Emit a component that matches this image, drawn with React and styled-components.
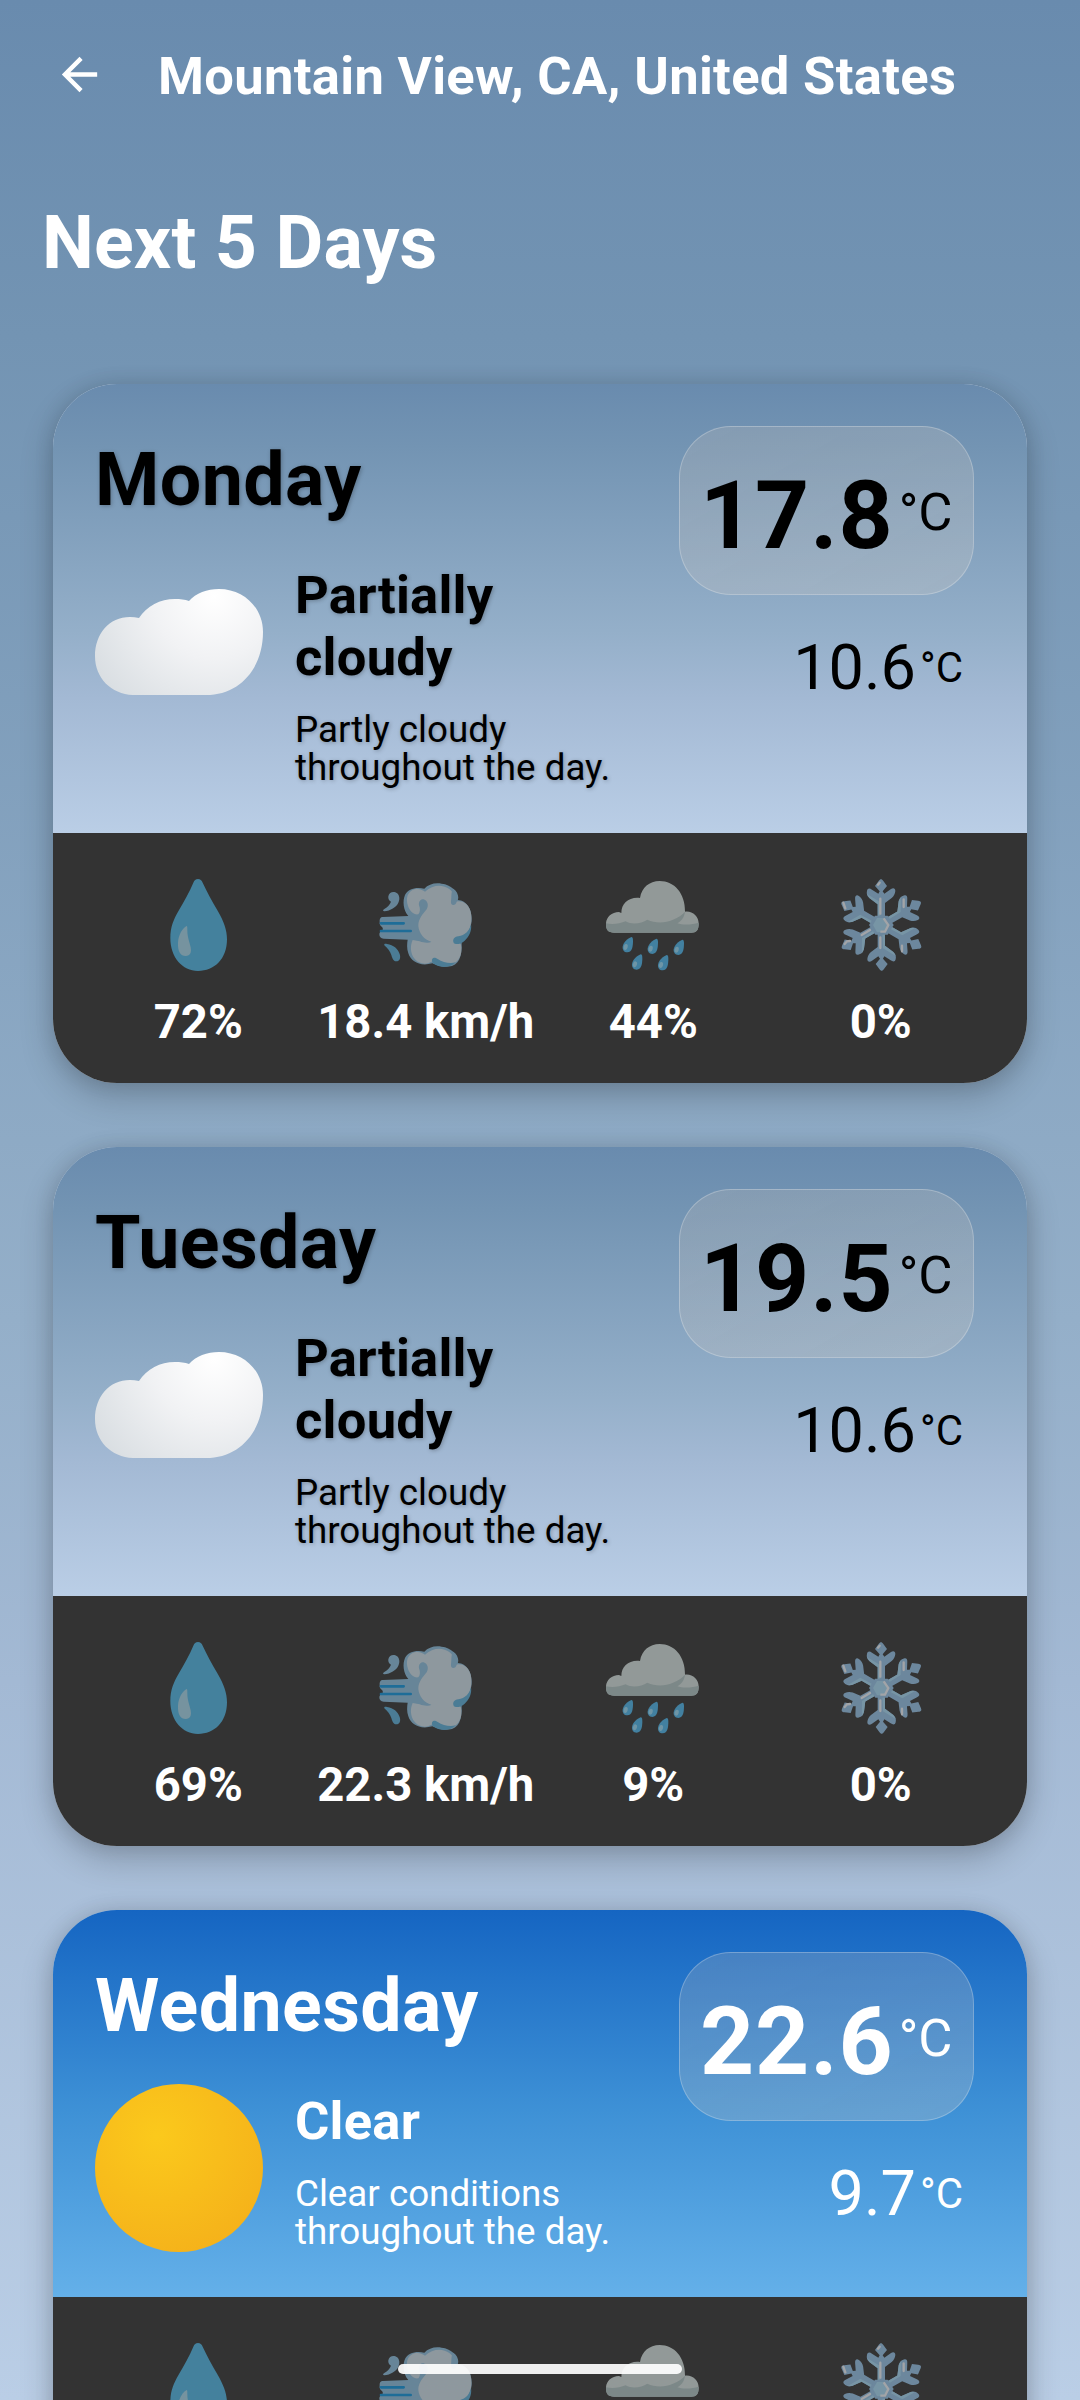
import React from "react";
import styled, { createGlobalStyle } from "styled-components";

const GlobalStyle = createGlobalStyle`
  *, *::before, *::after { box-sizing: border-box; }
  body { margin: 0; font-family: Roboto, "Liberation Sans", sans-serif; }
`;

const themes = {
  cloudy: {
    ink: "#000",
    sky: "linear-gradient(180deg, #698bae 0%, #7394b3 14%, #94afc9 55%, #a3b9d4 70%, #bacee6 100%)",
    shadow: "1px 1px 4px rgba(0, 0, 0, 0.26)",
  },
  clear: {
    ink: "#fff",
    sky: "linear-gradient(180deg, #1565c2 0%, #3e91d6 52%, #64b0e9 100%)",
    shadow: "none",
  },
};

const Screen = styled.main`
  width: 1080px;
  height: 2400px;
  overflow: hidden;
  display: flex;
  flex-direction: column;
  background: linear-gradient(180deg, #698bae 0%, #7394b3 14%, #94afc9 55%, #a3b9d4 70%, #bacee6 100%);
`;

const TopBar = styled.header`
  display: flex;
  align-items: center;
  height: 148px;
  padding-left: 53px;
  gap: 52px;
  flex: none;
`;

const BackButton = styled.button`
  display: flex;
  width: 53px;
  height: 53px;
  padding: 0;
  border: 0;
  background: none;
  color: #fff;
`;

const Place = styled.h1`
  margin: 3px 0 0;
  font-size: 52.5px;
  line-height: 62px;
  font-weight: 700;
  letter-spacing: 0.32px;
  color: #fff;
  white-space: nowrap;
`;

const Heading = styled.h2`
  margin: 0;
  padding: 52px 42px 0;
  height: 236px;
  flex: none;
  font-size: 73.5px;
  line-height: 86px;
  font-weight: 700;
  letter-spacing: 0.15px;
  color: #fff;
`;

const CardList = styled.section`
  display: flex;
  flex-direction: column;
  gap: 64px;
  padding: 0 53px;
`;

const Card = styled.article`
  flex: none;
  border-radius: 64px;
  overflow: hidden;
  background: #d3dde8;
  box-shadow: 0 14px 34px rgba(0, 0, 0, 0.2), 0 0 20px rgba(0, 0, 0, 0.11);
`;

const CardTop = styled.div`
  display: flex;
  justify-content: space-between;
  padding: 42px 53px 45px 42px;
  background: ${(p) => p.$theme.sky};
  color: ${(p) => p.$theme.ink};
`;

const Info = styled.div`
  padding-top: 11px;
  text-shadow: ${(p) => p.$theme.shadow};
`;

const Day = styled.h3`
  margin: 0;
  font-size: 73.5px;
  line-height: 86px;
  font-weight: 700;
  letter-spacing: 0.4px;
`;

const Conditions = styled.div`
  display: flex;
  align-items: flex-start;
  gap: 32px;
  padding-top: 35px;
`;

const SkyIcon = styled.svg`
  display: block;
  width: 168px;
  height: 168px;
  flex: none;
`;

const Summary = styled.div`
  width: 330px;
  padding: 6px 0 1px;
`;

const SummaryTitle = styled.h4`
  margin: 0;
  font-size: 52.5px;
  line-height: 62px;
  font-weight: 700;
  letter-spacing: 0.25px;
`;

const SummaryText = styled.p`
  margin: 23px 0 0;
  font-size: 36.75px;
  line-height: 38px;
`;

const Temps = styled.div`
  display: flex;
  flex-direction: column;
  align-items: flex-end;
  gap: 36px;
`;

const HighPill = styled.div`
  display: flex;
  align-items: flex-start;
  gap: 5px;
  width: 295px;
  height: 169px;
  padding: 33px 0 0 20px;
  border: 1px solid rgba(255, 255, 255, 0.24);
  border-radius: 52px;
  background: linear-gradient(150deg, rgba(198, 190, 184, 0.24), rgba(215, 208, 200, 0.26));
`;

const High = styled.span`
  font-size: 94.5px;
  line-height: 111px;
  font-weight: 700;
  letter-spacing: 0.9px;
`;

const Low = styled.span`
  font-size: 63px;
  line-height: 74px;
`;

const Unit = styled.span`
  font-size: ${(p) => p.$size}px;
  line-height: ${(p) => p.$size * 1.2}px;
  margin-top: ${(p) => p.$drop}px;
`;

const LowRow = styled.div`
  display: flex;
  align-items: flex-start;
  gap: 4px;
  padding-right: 11px;
`;

const Metrics = styled.footer`
  display: grid;
  grid-template-columns: repeat(4, 227.5px);
  justify-content: center;
  height: 250px;
  padding-right: 1px;
  background: #333;
`;

const Metric = styled.div`
  display: flex;
  flex-direction: column;
  align-items: center;
  padding-top: 37px;
`;

const MetricIcon = styled.svg`
  display: block;
  width: 110px;
  height: 110px;
`;

const MetricValue = styled.span`
  margin-top: 14px;
  font-size: 47.25px;
  line-height: 56px;
  font-weight: 700;
  color: #fff;
  white-space: nowrap;
`;

const HomeBar = styled.div`
  position: fixed;
  left: 398px;
  top: 2364px;
  width: 284px;
  height: 10px;
  border-radius: 5px;
  background: rgba(255, 255, 255, 0.92);
`;

function CloudIcon() {
  return (
    <SkyIcon viewBox="0 0 168 168">
      <defs>
        <radialGradient id="cloudFill" gradientUnits="userSpaceOnUse" cx="119" cy="38" r="140">
          <stop offset="0" stopColor="#ffffff" />
          <stop offset="0.45" stopColor="#f1f2f4" />
          <stop offset="1" stopColor="#d9dee2" />
        </radialGradient>
      </defs>
      <path
        fill="url(#cloudFill)"
        d="M0 98 C0 76 14 59 35 59 C38 59 41 59.500 44 60 C52 48 65 41 80 41 C85 41 90 41.500 94 43 C101 35 112 31 124 31 C149 31 168 50 168 74 C168 110 145 137 111 137 H38 C16 136 0 120 0 98 Z"
      />
    </SkyIcon>
  );
}

function SunIcon() {
  return (
    <SkyIcon viewBox="0 0 168 168">
      <defs>
        <radialGradient id="sunFill" gradientUnits="userSpaceOnUse" cx="62" cy="52" r="130">
          <stop offset="0" stopColor="#fbc91c" />
          <stop offset="1" stopColor="#f5b11a" />
        </radialGradient>
      </defs>
      <circle cx="84" cy="84" r="84" fill="url(#sunFill)" />
    </SkyIcon>
  );
}

function DropIcon() {
  return (
    <MetricIcon viewBox="0 0 330 330">
      <path
        fill="#44819d"
        d="M165 27 C158 27 154 31 151 38 C140 66 122 96 106 124 C92 149 82 170 82 205 C82 262 118 303 165 303 C214 303 252 267 252 208 C252 180 243 155 224 122 C206 91 190 62 179 38 C176 31 172 27 165 27 Z"
      />
      <path
        fill="#76939f"
        d="M131 168 C118 175 106 195 105 219 C104 245 113 258 128 258 C142 258 146 248 143 232 C138 210 133 200 133 180 C133 172 133 168 131 168 Z"
      />
    </MetricIcon>
  );
}

function WindIcon() {
  return (
    <MetricIcon viewBox="0 0 330 330">
      <g fill="#678598">
        <path d="M52 79 C54 68 64 64 73 67 C85 71 88 86 82 98 C76 112 58 122 40 124 C35 124 35 120 40 117 C50 111 57 103 60 95 C54 92 51 87 52 79 Z" />
        <path d="M35 141 L112 138 C97 122 94 93 102 75 C110 58 134 50 160 56 C172 43 192 37 212 41 C240 44 260 62 261 90 C287 92 303 117 302 150 C301 175 290 194 271 205 C275 245 270 280 243 288 C222 294 200 288 184 280 C148 290 120 276 112 250 C107 235 108 221 110 209 L38 206 C29 206 25 200 25 193 C25 187 28 185 33 182 C37 178 36 173 32 170 C27 166 25 162 26 156 C25 147 28 141 35 141 Z" />
      </g>
      <path fill="#4b7c95" d="M40 226 C38 222 42 220 48 222 C68 225 80 236 86 252 C90 264 86 274 76 274 C66 274 64 264 61 255 C57 243 50 235 40 226 Z" />
      <g fill="#8e989e">
        <path d="M162 65 C186 44 214 42 236 58 C250 70 253 82 248 97 C270 88 290 98 298 122 C306 150 299 184 278 200 C266 208 260 214 270 224 C274 247 268 268 250 280 C232 288 210 280 188 271 C170 286 146 284 132 268 C116 250 118 224 125 210 L146 214 C160 220 176 219 181 215 C160 210 144 190 142 168 C141 146 158 130 167 118 C174 106 170 92 158 88 C150 86 142 94 144 106 C148 115 148 127 142 133 C130 136 116 124 111 108 C103 84 110 65 130 58 C144 54 156 60 162 65 Z" />
      </g>
      <path fill="#678598" d="M246 56 C240 66 242 78 240 94 C238 104 246 108 253 103 C258 99 256 90 262 85 C262 72 256 61 246 56 Z" />
      <path fill="#4b7c95" d="M300 163 C295 184 282 196 262 199 C249 201 244 209 248 218 C254 226 270 222 281 212 C295 200 303 181 300 163 Z" />
      <path fill="#4b7c95" d="M187 264 C180 267 182 279 191 283 C212 295 238 293 254 277 C236 282 216 277 200 267 C195 264 191 262 187 264 Z" />
      <path stroke="#1e6d98" strokeWidth="8" strokeLinecap="round" d="M30 160 H98 M30 183 H119" />
    </MetricIcon>
  );
}

const rainDrops = [
  [85, 224],
  [160, 229],
  [238, 232],
  [113, 276],
  [191, 278],
];

function RainIcon() {
  return (
    <MetricIcon viewBox="-5 0 330 330">
      <path
        fill="#929998"
        d="M19 160 C20 141 36 126 58 126 C60 127 62 128 65 129 C65 100 88 80 121 84 C126 53 149 33 180 33 C224 33 257 70 256 125 C278 122 297 138 297 161 C297 180 290 188 275 188 H44 C25 188 19 181 19 160 Z"
      />
      <path
        fill="#7c8888"
        d="M19 160 C38 165 61 161 78 154 C96 165 126 161 143 149 C166 160 196 160 220 149 C236 142 250 133 256 125 C254 142 244 154 233 160 C250 166 280 164 297 158 C298 180 290 188 275 188 H44 C25 188 18 180 19 160 Z"
      />
      {rainDrops.map(([x, y]) => (
        <g key={x} transform={`translate(${x} ${y})`}>
          <path fill="#4280a0" d="M10 -23 C14 -23 15 -18 15 -12 C15 4 13 22 -2 23 C-12 23 -17 15 -16 6 C-14 -8 -1 -18 10 -23 Z" />
          <ellipse cx="-7" cy="7" rx="6" ry="9" fill="#6e95a6" transform="rotate(15 -7 7)" />
        </g>
      ))}
    </MetricIcon>
  );
}

function SnowArm({ angle }) {
  return (
    <g transform={`translate(167 165) rotate(${angle})`}>
      <path
        fill="#6c879d"
        d="M-11 -20 V-62 L-36 -81 C-43 -87 -45 -94 -43 -103 C-41 -111 -35 -111 -28 -106 L-9 -94 L-5 -101 L-19 -117 L-8 -132 C-3 -139 1 -139 6 -132 L17 -117 L4 -101 L9 -94 L28 -107 C35 -112 42 -111 42 -102 C41 -94 38 -87 31 -81 L11 -66 V-20 Z"
      />
      <path
        fill="#7795a5"
        d="M-11 -20 V-62 L-36 -81 L-43 -92 L-32 -86 L-5 -70 L-3 -20 Z"
      />
    </g>
  );
}

function SnowIcon() {
  return (
    <MetricIcon viewBox="1 0 330 330">
      {[0, 60, 120, 180, 240, 300].map((angle) => (
        <SnowArm key={angle} angle={angle} />
      ))}
      <path fill="#6c879d" d="M148 137 H186 L204 165 L186 194 H149 L130 165 Z" />
      <path fill="#7795a5" d="M154 144 H178 L188 165 L178 187 H154 L142 165 Z" />
      <path fill="none" stroke="#a2a4a7" strokeWidth="7" d="M174 145 L188 165 L178 185 H164" />
      <g fill="none" stroke="#a2a4a7" strokeWidth="7" strokeLinecap="round">
        <path d="M164 86 V131 M164 202 V234 M108 195 L133 180 M234 88 V111 M229 227 V244 M53 98 L59 115 M157 44 L162 38 M57 222 L64 214 L73 213" />
      </g>
    </MetricIcon>
  );
}

const skyIcons = { cloudy: CloudIcon, clear: SunIcon };

const forecast = [
  {
    day: "Monday",
    sky: "cloudy",
    title: ["Partially", "cloudy"],
    text: ["Partly cloudy", "throughout the day."],
    high: "17.8",
    low: "10.6",
    metrics: ["72%", "18.4 km/h", "44%", "0%"],
  },
  {
    day: "Tuesday",
    sky: "cloudy",
    title: ["Partially", "cloudy"],
    text: ["Partly cloudy", "throughout the day."],
    high: "19.5",
    low: "10.6",
    metrics: ["69%", "22.3 km/h", "9%", "0%"],
  },
  {
    day: "Wednesday",
    sky: "clear",
    title: ["Clear"],
    text: ["Clear conditions", "throughout the day."],
    high: "22.6",
    low: "9.7",
    metrics: ["", "", "", ""],
  },
];

const metricIcons = [DropIcon, WindIcon, RainIcon, SnowIcon];

const lines = (parts) =>
  parts.map((part, i) => (
    <React.Fragment key={part}>
      {i > 0 && <br />}
      {part}
    </React.Fragment>
  ));

function DayCard({ item }) {
  const theme = themes[item.sky];
  const Sky = skyIcons[item.sky];
  return (
    <Card>
      <CardTop $theme={theme}>
        <Info $theme={theme}>
          <Day>{item.day}</Day>
          <Conditions>
            <Sky />
            <Summary>
              <SummaryTitle>{lines(item.title)}</SummaryTitle>
              <SummaryText>{lines(item.text)}</SummaryText>
            </Summary>
          </Conditions>
        </Info>
        <Temps>
          <HighPill>
            <High>{item.high}</High>
            <Unit $size={52.5} $drop={21}>°C</Unit>
          </HighPill>
          <LowRow>
            <Low>{item.low}</Low>
            <Unit $size={42} $drop={12}>°C</Unit>
          </LowRow>
        </Temps>
      </CardTop>
      <Metrics>
        {metricIcons.map((Icon, i) => (
          <Metric key={i}>
            <Icon />
            <MetricValue>{item.metrics[i]}</MetricValue>
          </Metric>
        ))}
      </Metrics>
    </Card>
  );
}

export default function App() {
  return (
    <>
      <GlobalStyle />
      <Screen>
        <TopBar>
          <BackButton aria-label="Back">
            <svg viewBox="0 0 24 24" width="53" height="53" fill="currentColor">
              <path d="M20 11H7.83l5.59-5.59L12 4l-8 8 8 8 1.410-1.410L7.830 13H20v-2z" />
            </svg>
          </BackButton>
          <Place>Mountain View, CA, United States</Place>
        </TopBar>
        <Heading>Next 5 Days</Heading>
        <CardList>
          {forecast.map((item) => (
            <DayCard key={item.day} item={item} />
          ))}
        </CardList>
        <HomeBar />
      </Screen>
    </>
  );
}
